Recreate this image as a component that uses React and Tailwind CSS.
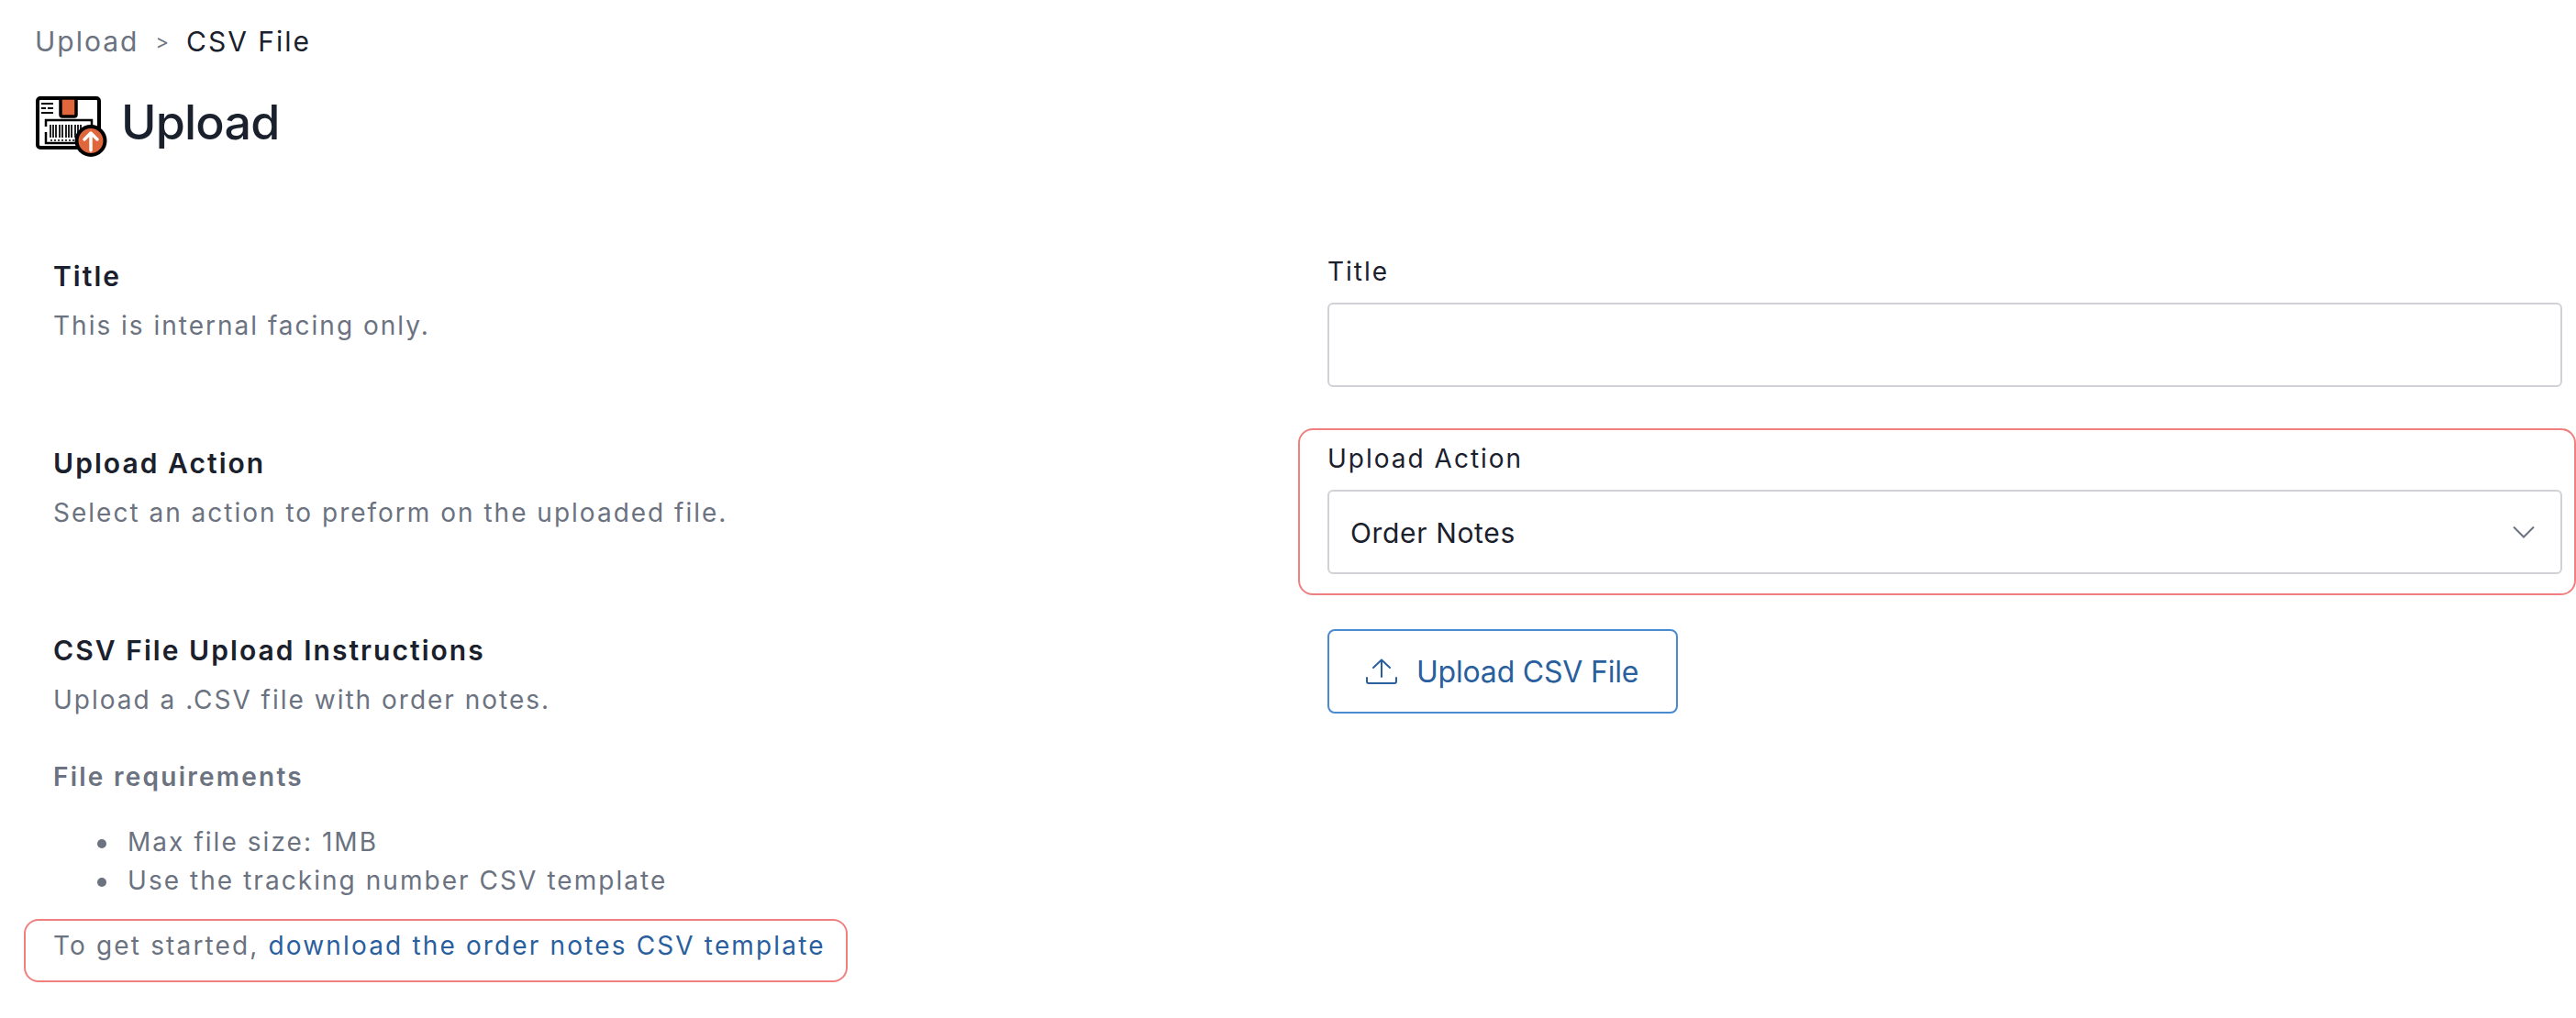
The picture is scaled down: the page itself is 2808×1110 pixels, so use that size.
import React from "react";

const font = "font-['Inter','Liberation_Sans',sans-serif]";

function PackageIcon() {
  return (
    <svg width="78" height="66" viewBox="0 0 78 66" className="shrink-0" fill="none">
      <rect x="2" y="2" width="67" height="54" rx="3" fill="#fff" stroke="#000" strokeWidth="4" />
      <path d="M27 2h17v18a2 2 0 0 1-2 2H29a2 2 0 0 1-2-2z" fill="#e0663b" stroke="#000" strokeWidth="3.500" />
      <path d="M6 8h13M6 18h13" stroke="#000" strokeWidth="2" />
      <path d="M6 13h5M13 13h6" stroke="#000" strokeWidth="2" />
      <path d="M11 33v-7h50v25H11V39" stroke="#000" strokeWidth="2.500" />
      <path d="M16 31v14M19 31v14M22 31v14M26 31v14M29 31v14M33 31v14M36 31v14M39 31v14M43 31v14M46 31v14M49 31v14" stroke="#000" strokeWidth="1.700" />
      <path d="M16 48h32" stroke="#000" strokeWidth="1.400" strokeDasharray="2 2" />
      <circle cx="60" cy="48.500" r="15.500" fill="#e0663b" stroke="#000" strokeWidth="4" />
      <path d="M60 59V40M53 47l7-7 7 7" stroke="#fff" strokeWidth="3.500" strokeLinecap="round" strokeLinejoin="round" />
    </svg>
  );
}

function UploadIcon() {
  return (
    <svg width="34" height="28" viewBox="0 0 34 28" fill="none" stroke="#2a5f9e" strokeWidth="2" strokeLinecap="round" strokeLinejoin="round" className="shrink-0">
      <path d="M17 20V1.500M8 10l9-8.500L26 10" />
      <path d="M1 21v4a2 2 0 0 0 2 2h28a2 2 0 0 0 2-2v-4" />
    </svg>
  );
}

function Chevron() {
  return (
    <svg width="24" height="14" viewBox="0 0 24 14" fill="none" stroke="#6b7280" strokeWidth="2" className="shrink-0">
      <path d="M1 1.500l11 11 11-11" />
    </svg>
  );
}

function Heading({ title, children }) {
  return (
    <div className="pt-[6px]">
      <h2 className="text-[30px] leading-[44px] font-semibold tracking-[2.05px] text-[#1a202c]">{title}</h2>
      <p className="mt-[10px] text-[28px] leading-[44px] tracking-[2px] text-[#6b7280]">{children}</p>
    </div>
  );
}

function FieldLabel({ children }) {
  return <label className="block pt-[1px] mb-[12px] text-[28px] leading-[44px] tracking-[2px] text-[#1a202c]">{children}</label>;
}

function Bullet({ children }) {
  return (
    <li className="flex items-center gap-[23px]">
      <span className="w-[10px] h-[10px] mt-[4px] rounded-full bg-[#6b7280] shrink-0" />
      <span>{children}</span>
    </li>
  );
}

export default function App() {
  return (
    <div className={`${font} w-[2808px] h-[1110px] overflow-hidden bg-white`}>
      <nav className="pl-[38px] pt-[23px] flex items-center h-[67px] text-[30px] leading-[44px] tracking-[2px]">
        <span className="text-[#6b7280]">Upload</span>
        <span className="ml-[18px] mr-[17px] text-[22px] text-[#6b7280]">&gt;</span>
        <span className="text-[#1a202c]">CSV File</span>
      </nav>
      <div className="pl-[39px] pt-[32px] flex items-center gap-[15px] h-[110px]">
        <PackageIcon />
        <h1 className="pb-[8px] text-[52px] leading-[70px] font-medium tracking-[-0.8px] text-[#1a202c]">Upload</h1>
      </div>

      <div className="mt-[96px] grid grid-cols-[1447px_1346px] gap-y-[55px]">
        <div className="pl-[58px]">
          <Heading title="Title">This is internal facing only.</Heading>
        </div>
        <div>
          <FieldLabel>Title</FieldLabel>
          <div className="h-[92px] rounded-[6px] border-2 border-[#d1d1d8]" />
        </div>

        <div className="pl-[58px]">
          <Heading title="Upload Action">Select an action to preform on the uploaded file.</Heading>
        </div>
        <div className="-mt-[10px] -mb-[23px] -ml-[32px] -mr-[15px] pt-[8px] pb-[21px] pl-[30px] pr-[13px] rounded-[16px] border-2 border-[#f08080]">
          <FieldLabel>Upload Action</FieldLabel>
          <div className="h-[92px] rounded-[6px] border-2 border-[#d1d1d8] pl-[23px] pr-[28px] flex items-center justify-between">
            <span className="pt-[2px] text-[30px] tracking-[0.65px] text-[#1a202c]">Order Notes</span>
            <Chevron />
          </div>
        </div>

        <div className="pl-[58px]">
          <Heading title="CSV File Upload Instructions">Upload a .CSV file with order notes.</Heading>
          <h3 className="mt-[40px] text-[28px] leading-[44px] font-semibold tracking-[2.25px] text-[#6b7280]">File requirements</h3>
          <ul className="mt-[28px] pl-[48px] text-[28px] leading-[42px] tracking-[2.05px] text-[#6b7280]">
            <Bullet>Max file size: 1MB</Bullet>
            <Bullet>Use the tracking number CSV template</Bullet>
          </ul>
          <p className="mt-[21px] -ml-[32px] w-[898px] h-[69px] pl-[30px] pt-[5px] rounded-[16px] border-2 border-[#f08080] text-[28px] leading-[44px] tracking-[2.15px] text-[#6b7280]">
            To get started, <a className="text-[#2a5f9e]">download the order notes CSV template</a>
          </p>
        </div>
        <div className="pt-[5px]">
          <button className="h-[92px] w-[382px] rounded-[8px] border-2 border-[#4a8ad0] flex items-center pl-[40px] gap-[21px] text-[32px] tracking-[-0.2px] text-[#2a5f9e]">
            <UploadIcon />
            <span className="pt-[2px]">Upload CSV File</span>
          </button>
        </div>
      </div>
    </div>
  );
}
